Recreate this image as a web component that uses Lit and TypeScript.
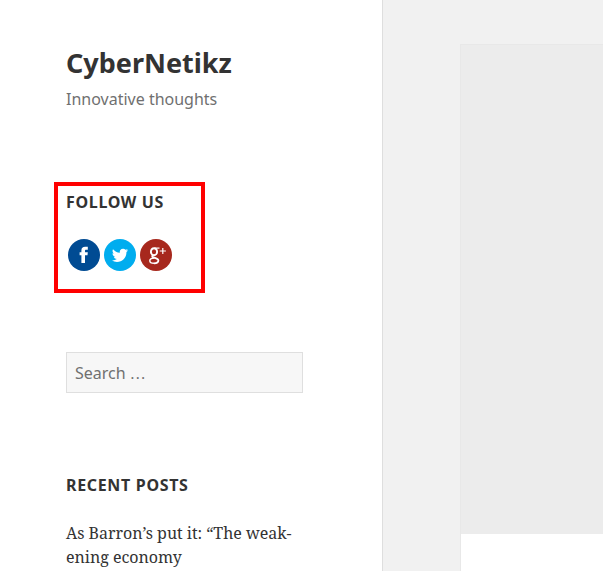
import { LitElement, html, css, svg } from "lit";
import { customElement } from "lit/decorators.js";

const facebook = svg`<circle cx="16" cy="16" r="16" fill="#004b93"/>
  <path fill="#fff" d="M13.4 24v-7.7h-1.8v-3h1.8v-1.8c0-2.6 1.3-3.8 3.7-3.8h2.7v3h-1.6c-1 0-1.2.4-1.2 1.2v1.4h2.8l-.3 3H17V24z"/>`;

const twitter = svg`<circle cx="16" cy="16" r="16" fill="#00adef"/>
  <path fill="#fff" transform="translate(7.9 8.2) scale(.675)" d="M23.953 4.57a10 10 0 01-2.825.775 4.958 4.958 0 002.163-2.723c-.951.555-2.005.959-3.127 1.184a4.92 4.92 0 00-8.384 4.482C7.69 8.095 4.067 6.13 1.64 3.162a4.822 4.822 0 00-.666 2.475c0 1.71.87 3.213 2.188 4.096a4.904 4.904 0 01-2.228-.616v.06a4.923 4.923 0 003.946 4.827 4.996 4.996 0 01-2.212.085 4.936 4.936 0 004.604 3.417 9.867 9.867 0 01-6.102 2.105c-.39 0-.779-.023-1.17-.067a13.995 13.995 0 007.557 2.209c9.053 0 13.998-7.496 13.998-13.985 0-.21 0-.42-.015-.63A9.935 9.935 0 0024 4.59z"/>`;

const googlePlus = svg`<circle cx="16" cy="16" r="16" fill="#a7281d"/>
  <g fill="none" stroke="#fff">
    <ellipse cx="14" cy="12.7" rx="3.1" ry="3.5" stroke-width="1.9"/>
    <path stroke-width="1.2" d="M14.2 9.1h5.3"/>
    <path stroke-width="1.8" d="M13 16c-1.4 1-.9 1.8.6 2.4 2.2.9 4.8 1.3 4.8 3.2 0 1.8-2.2 2.7-4.4 2.7"/>
    <path stroke-width="1.4" d="M14.2 24.3c-2.4 0-4.4-.8-4.4-2.6 0-1.7 2.2-2.6 4.8-2.7"/>
    <path stroke-width="1.2" d="M22.8 8.9v6.2M19.7 12h6.2"/>
  </g>`;

@customElement("app-root")
export class AppRoot extends LitElement {
  static styles = css`
    :host { display: flex; height: 571px; width: 603px; overflow: hidden; background: #f1f1f1; color: #333;
      font-family: "Noto Sans", sans-serif; }
    * { box-sizing: border-box; }
    .sidebar { width: 383px; flex: none; background: #fff; border-right: 1px solid #dedede; padding: 44px 0 0 54px; }
    h1 { margin: 0 0 0 12px; font-size: 27px; line-height: 38px; font-weight: 700; }
    .tagline { margin: 5px 0 0 12px; font-size: 16px; line-height: 24px; color: #707070; }
    .follow { width: 151px; height: 111px; margin-top: 71px; border: 4px solid #f00; padding: 4px 0 0 8px; }
    h2 { margin: 0; font-size: 16px; line-height: 24px; font-weight: 700; letter-spacing: .67px; white-space: nowrap; }
    .icons { display: flex; gap: 4px; margin: 25px 0 0 2px; }
    .icons svg { width: 32px; height: 32px; display: block; }
    .search { width: 237px; height: 41px; margin: 59px 0 0 12px; padding: 8px 8px 0; border: 1px solid #dfdfdf;
      background: #f7f7f7; color: #707070; font-size: 16px; line-height: 24px; white-space: nowrap; }
    .dots { font-family: "Liberation Serif", serif; line-height: 1; }
    .recent { margin: 80px 0 0 12px; }
    .post { margin-top: 24px; font-family: "Noto Serif", "Liberation Serif", serif; font-size: 16px; line-height: 24px;
      letter-spacing: -.02px; white-space: nowrap; }
    .content { flex: 1; padding: 44px 0 0 77px; }
    article { height: 527px; background: #fff; border-left: 1px solid #e8e8e8; }
    .media { height: 490px; background: #ececec; border-top: 1px solid #e8e8e8; }
  `;

  render() {
    return html`
      <aside class="sidebar">
        <h1>CyberNetikz</h1>
        <div class="tagline">Innovative thoughts</div>
        <section class="follow">
          <h2>FOLLOW US</h2>
          <div class="icons">
            ${[facebook, twitter, googlePlus].map((i) => html`<svg viewBox="0 0 32 32">${i}</svg>`)}
          </div>
        </section>
        <div class="search" role="searchbox">Search <span class="dots">…</span></div>
        <section class="recent">
          <h2>RECENT POSTS</h2>
          <div class="post">As Barron’s put it: “The weak-<br />ening economy</div>
        </section>
      </aside>
      <main class="content"><article><div class="media"></div></article></main>
    `;
  }
}
